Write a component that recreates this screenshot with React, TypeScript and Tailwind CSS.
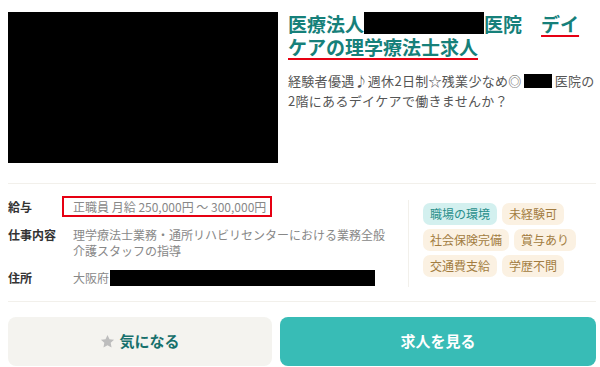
import React from "react";

const jp = { fontFamily: '"Noto Sans CJK JP", "Noto Sans", sans-serif' };

function Star() {
  return (
    <svg width="15" height="15" viewBox="0 0 24 24" className="mr-[4px]">
      <path
        d="M12 1.5l3.2 6.7 7.3.9-5.4 5 1.4 7.3L12 17.8l-6.5 3.6 1.4-7.3-5.4-5 7.3-.9z"
        fill="#bdbdbd"
      />
    </svg>
  );
}

function Tag({ children, cyan }: { children: React.ReactNode; cyan?: boolean }) {
  return (
    <span
      className={
        cyan
          ? "inline-block rounded-[7px] bg-[#d3f0ef] px-[7px] text-[12px] leading-[22px] text-[#2a8f8b]"
          : "inline-block rounded-[7px] bg-[#fbf1e2] px-[7px] text-[12px] leading-[22px] text-[#a27c40]"
      }
    >
      {children}
    </span>
  );
}

export default function App() {
  return (
    <div className="h-[367px] w-[600px] overflow-hidden bg-white pl-[8px] pr-[4px] pt-[12px]" style={jp}>
      <div className="flex gap-[10px]">
        <div className="h-[151px] w-[270px] shrink-0 bg-black" />
        <div className="flex-1">
          <div className="text-[19px] font-bold leading-[23px] text-[#16807a]">
            医療法人<span className="inline-block h-[22px] w-[120px] bg-black align-top" />医院{"\u3000"}
            <span className="underline decoration-[#e60012] decoration-2 underline-offset-[3px]">
              デイケアの理学療法士求人
            </span>
          </div>
          <p className="mt-[13px] text-[13px] leading-[20px] tracking-[0.3px] text-[#555]">
            経験者優遇♪週休2日制☆残業少なめ◎
            <span className="ml-[2px] mr-[3px] inline-block h-[14px] w-[28px] bg-black align-[-2px]" />
            医院の
            <br />
            2階にあるデイケアで働きませんか？
          </p>
        </div>
      </div>

      <div className="mt-[20px] border-t border-[#f2f0eb]" />

      <div className="flex pt-[12px]">
        <div className="w-[400px] shrink-0 text-[12px]">
          <div className="flex items-center">
            <div className="w-[65px] shrink-0 font-bold text-[#333]">給与</div>
            <span className="-ml-[11px] inline-block border-2 border-[#e60012] pl-[9px] pr-[4px] leading-[17px] text-[#888]">
              正職員 月給 250,000円 〜 300,000円
            </span>
          </div>
          <div className="mt-[10px] flex leading-[16px]">
            <div className="w-[65px] shrink-0 font-bold text-[#333]">仕事内容</div>
            <div className="w-[325px] text-[#888]">
              理学療法士業務・通所リハビリセンターにおける業務全般
              <br />
              介護スタッフの指導
            </div>
          </div>
          <div className="mt-[11px] flex items-center leading-[16px]">
            <div className="w-[65px] shrink-0 font-bold text-[#333]">住所</div>
            <div className="flex items-center text-[#888]">
              大阪府<span className="ml-[1px] inline-block h-[16px] w-[265px] bg-black" />
            </div>
          </div>
        </div>
        <div className="mt-[4px] h-[87px] flex-1 border-l border-[#f2f0eb] pl-[14px] pt-[3px]">
          <div className="flex flex-wrap gap-x-[5px] gap-y-[4px]">
            <Tag cyan>職場の環境</Tag>
            <Tag>未経験可</Tag>
            <Tag>社会保険完備</Tag>
            <Tag>賞与あり</Tag>
            <Tag>交通費支給</Tag>
            <Tag>学歴不問</Tag>
          </div>
        </div>
      </div>

      <div className="mt-[14px] border-t border-[#f2f0eb]" />

      <div className="mt-[15px] flex gap-[8px]">
        <button className="flex h-[49px] w-[264px] shrink-0 items-center justify-center rounded-[8px] bg-[#f4f3ef] text-[15px] font-bold text-[#17706c]">
          <Star />
          気になる
        </button>
        <button className="flex h-[49px] flex-1 items-center justify-center rounded-[8px] bg-[#38bcb6] text-[15px] font-bold text-white">
          求人を見る
        </button>
      </div>
    </div>
  );
}
